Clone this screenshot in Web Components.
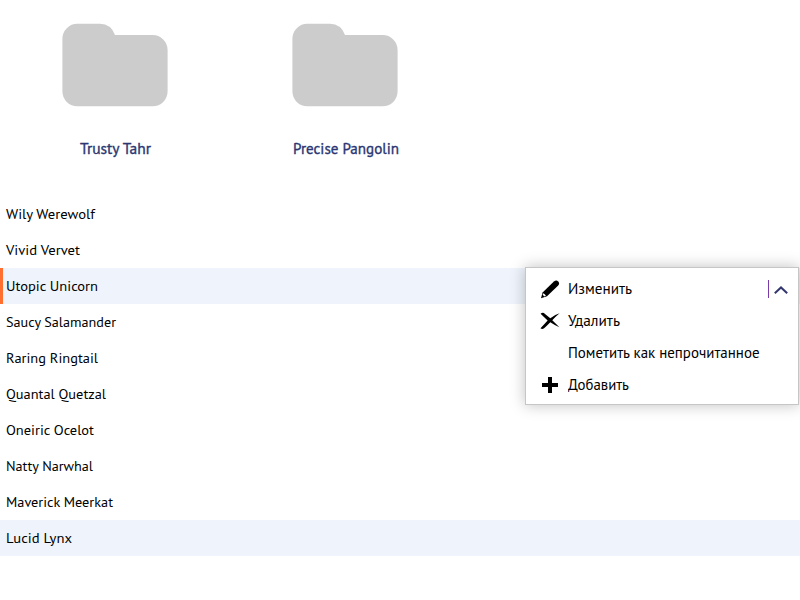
<!DOCTYPE html>
<html lang="ru">
<head>
<meta charset="utf-8">
<title>Releases</title>
<style>
body{margin:0;background:#fff;color:#000;font-family:"PT Sans","Noto Sans",sans-serif}
</style>
</head>
<body>
<release-browser></release-browser>
<script>
// Text label scaled horizontally to an exact width.
class FitText extends HTMLElement{
  connectedCallback(){
    this.attachShadow({mode:'open'}).innerHTML=`<style>:host{display:block;white-space:nowrap}span{display:inline-block;transform-origin:0 50%}</style><span><slot></slot></span>`;
    const width=Number(this.getAttribute('width'));
    const span=this.shadowRoot.querySelector('span');
    this.style.width=width+'px';
    const natural=span.getBoundingClientRect().width;
    if(natural)span.style.transform=`scaleX(${width/natural})`;
  }
}
class FolderCard extends HTMLElement{
  connectedCallback(){
    this.attachShadow({mode:'open'}).innerHTML=`<style>
:host{display:flex;flex-direction:column;align-items:center;width:230px;padding-top:23px;box-sizing:border-box;color:#2b3672;font-size:15px;line-height:20px;-webkit-text-stroke:.35px #2b3672}
svg{display:block;margin-bottom:32px}
::slotted(*){padding-left:1px}
</style><svg width="106" height="84" viewBox="0 0 106 84"><path fill="#ccc" d="M.4 15.8A15 15 0 0 1 15.4.8H38Q49 1 53 12H90.6A15 15 0 0 1 105.6 27V68.3A15 15 0 0 1 90.6 83.3H15.4A15 15 0 0 1 .4 68.3Z"/></svg><slot></slot>`;
  }
}
class ReleaseRow extends HTMLElement{
  connectedCallback(){
    this.attachShadow({mode:'open'}).innerHTML=`<style>
:host{display:flex;align-items:center;box-sizing:border-box;height:36px;border-left:3px solid transparent;padding:1px 0 0 3px;font-size:14px;line-height:21px}
:host([tinted]){background:#eff4fc;border-left-color:#eff4fc}
:host([active]){border-left-color:#ff7030}
</style><slot></slot>`;
  }
}
const ICONS={
 edit:'<path d="M0 18.2 1.6 12.5 12.9 1.4Q15.4-.3 17.2 1.4 19 3.2 17.2 5.6L6 16.2Z"/><path fill="#fff" d="M1.6 14.6 2.6 13.2 5 15.6 3.1 16.4Z"/>',
 remove:'<path d="M-.4 1.7Q2-.1 4 1.9L9.3 6.3Q13.5 2.8 18.6 1.3 14.8 4.4 11.3 8.3L18.4 15.2Q12.5 12.6 9.3 10.3 5.5 14.2 3.1 16.3 1 17.7-.5 16.3 3 12.6 6.6 8.5Z"/>',
 add:'<path d="M7 1h4v6h6v4h-6v6H7v-6H1V7h6Z"/>'
};
class MenuEntry extends HTMLElement{
  connectedCallback(){
    this.attachShadow({mode:'open'}).innerHTML=`<style>
:host{display:grid;grid-template-columns:19px auto;column-gap:8px;align-items:center;height:32px;font-size:15px;line-height:20px}
svg{display:block;overflow:visible}
</style><svg width="19" height="19" viewBox="0 0 19 19">${ICONS[this.getAttribute('icon')]||''}</svg><slot></slot>`;
  }
}
class ContextMenu extends HTMLElement{
  connectedCallback(){
    this.attachShadow({mode:'open'}).innerHTML=`<style>
:host{display:flex;justify-content:space-between;align-items:flex-start;box-sizing:border-box;width:274px;height:138px;padding:5px 10px 5px 15px;border:1px solid #c6c6c6;background:#fff;box-shadow:0 0 14px rgba(0,0,0,.25)}
.tools{display:flex;margin-top:7px}
.tools i{width:1px;height:18px;background:#7b3ba8;margin-right:4px}
svg{display:block}
</style><div><slot></slot></div><div class="tools"><i></i><svg width="15" height="18" viewBox="0 0 15 18"><path d="M1.8 13.2 8 7.4 14.2 13.2" fill="none" stroke="#33376f" stroke-width="2"/></svg></div>`;
  }
}
class ReleaseBrowser extends HTMLElement{
  connectedCallback(){
    const rows=[['Wily Werewolf',89],['Vivid Vervet',74],['Utopic Unicorn',92,'tinted active'],['Saucy Salamander',110],['Raring Ringtail',92],['Quantal Quetzal',100],['Oneiric Ocelot',88],['Natty Narwhal',87],['Maverick Meerkat',107],['Lucid Lynx',66,'tinted']];
    this.attachShadow({mode:'open'}).innerHTML=`<style>
:host{display:block;position:relative;width:800px;height:600px;overflow:hidden}
.folders{display:flex;height:196px}
context-menu{position:absolute;left:525px;top:267px}
</style>
<div class="folders"><folder-card><fit-text width="71">Trusty Tahr</fit-text></folder-card><folder-card><fit-text width="106">Precise Pangolin</fit-text></folder-card></div>
<main>${rows.map(([t,w,a])=>`<release-row ${a||''}><fit-text width="${w}">${t}</fit-text></release-row>`).join('')}</main>
<context-menu>
<menu-entry icon="edit"><fit-text width="64">Изменить</fit-text></menu-entry>
<menu-entry icon="remove"><fit-text width="52">Удалить</fit-text></menu-entry>
<menu-entry><fit-text width="191.5">Пометить как непрочитанное</fit-text></menu-entry>
<menu-entry icon="add"><fit-text width="61">Добавить</fit-text></menu-entry>
</context-menu>`;
  }
}
customElements.define('folder-card',FolderCard);
customElements.define('release-row',ReleaseRow);
customElements.define('menu-entry',MenuEntry);
customElements.define('context-menu',ContextMenu);
customElements.define('release-browser',ReleaseBrowser);
customElements.define('fit-text',FitText);
</script>
</body>
</html>
